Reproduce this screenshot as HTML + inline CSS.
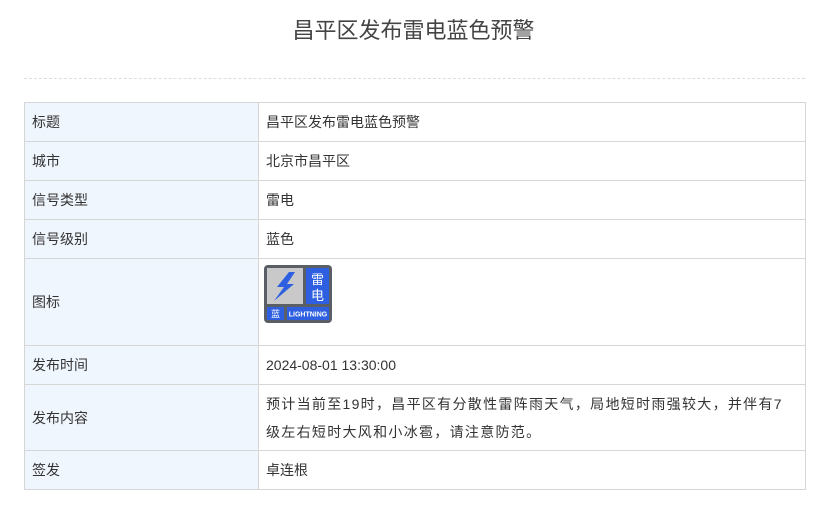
<!DOCTYPE html>
<html><head><meta charset="utf-8"><style>
body{margin:0;width:827px;height:510px;background:#fff;font-family:"Liberation Sans","Noto Sans CJK SC",sans-serif;color:#333;position:relative;overflow:hidden}
h1{position:absolute;left:0;width:827px;top:16px;margin:0;text-align:center;font-size:22px;font-weight:normal;color:#444;line-height:30px}
.dash{position:absolute;left:24px;width:781px;top:78px;border-top:1px dashed #ddd}
table{position:absolute;left:24px;top:102px;width:782px;border-collapse:collapse;font-size:14px}
td{border:1px solid #d6d6d6;padding:0 7px;color:#333}
td.l{background:#f0f6fe;width:219px}
</style></head><body>
<h1>昌平区发布雷电蓝色预警</h1>
<div class="dash"></div>
<table>
<tr style="height:39px"><td class="l">标题</td><td>昌平区发布雷电蓝色预警</td></tr>
<tr style="height:39px"><td class="l">城市</td><td>北京市昌平区</td></tr>
<tr style="height:39px"><td class="l">信号类型</td><td>雷电</td></tr>
<tr style="height:39px"><td class="l">信号级别</td><td>蓝色</td></tr>
<tr style="height:87px"><td class="l">图标</td><td style="vertical-align:top;padding-top:6px">
<svg width="68" height="58" viewBox="0 0 68 58" style="display:block;margin-left:-2px">
<rect x="0" y="0" width="68" height="58" rx="4" fill="#5a5f66"/>
<rect x="3" y="3" width="36" height="36" fill="#c9c9c9"/>
<path d="M25 7 L13 22 L20 22 L10 36 L30 19 L23 19 L31 7 Z" fill="#2d5fe0"/>
<rect x="42" y="3" width="23" height="36" fill="#2d5fe0"/>
<text x="53.5" y="19" font-size="13" fill="#fff" text-anchor="middle" font-family="Noto Sans CJK SC,sans-serif">雷</text>
<text x="53.5" y="35" font-size="13" fill="#fff" text-anchor="middle" font-family="Noto Sans CJK SC,sans-serif">电</text>
<rect x="3" y="42" width="17" height="13" fill="#2d5fe0"/>
<text x="11.5" y="52" font-size="9" fill="#fff" text-anchor="middle" font-family="Noto Sans CJK SC,sans-serif">蓝</text>
<rect x="23" y="42" width="42" height="13" fill="#2d5fe0"/>
<text x="44" y="51.5" font-size="7" fill="#fff" text-anchor="middle" font-family="Liberation Sans Narrow,Liberation Sans,sans-serif" font-weight="bold">LIGHTNING</text>
</svg></td></tr>
<tr style="height:39px"><td class="l">发布时间</td><td>2024-08-01 13:30:00</td></tr>
<tr style="height:66px"><td class="l">发布内容</td><td style="line-height:28px;letter-spacing:1.3px">预计当前至19时，昌平区有分散性雷阵雨天气，局地短时雨强较大，并伴有7<br>级左右短时大风和小冰雹，请注意防范。</td></tr>
<tr style="height:39px"><td class="l">签发</td><td>卓连根</td></tr>
</table>
</body></html>
